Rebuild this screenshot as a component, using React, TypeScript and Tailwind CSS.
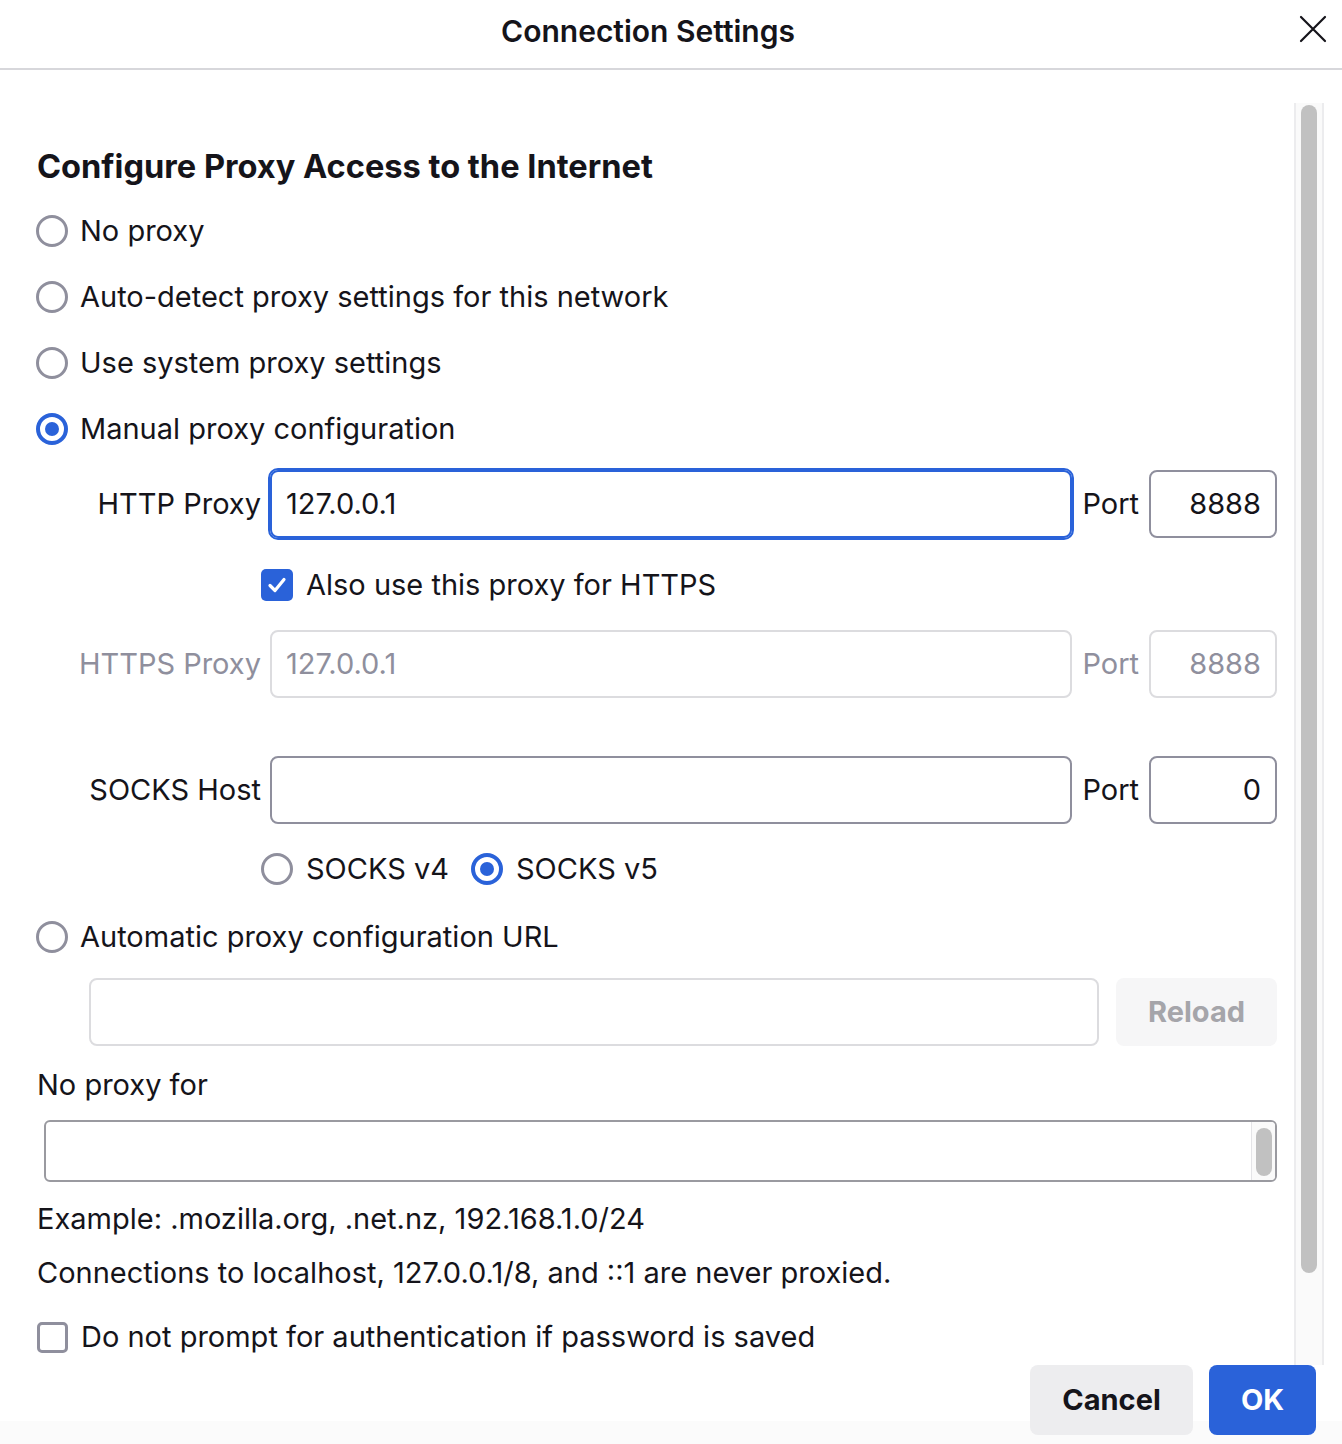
import React from "react";

const font = { fontFamily: "Inter, 'Noto Sans', 'Liberation Sans', sans-serif" };

function Radio({ checked }: { checked?: boolean }) {
  if (checked) {
    return (
      <span className="w-[32px] h-[32px] rounded-full border-[4px] border-[#2a62d9] bg-white flex items-center justify-center shrink-0">
        <span className="w-[14px] h-[14px] rounded-full bg-[#2a62d9]" />
      </span>
    );
  }
  return <span className="w-[32px] h-[32px] rounded-full border-[3px] border-[#8f8f9d] bg-white shrink-0" />;
}

function RadioRow({ label, checked, className = "" }: { label: string; checked?: boolean; className?: string }) {
  return (
    <div className={`flex items-center gap-[12px] h-[66px] -ml-[1px] ${className}`}>
      <Radio checked={checked} />
      <span>{label}</span>
    </div>
  );
}

function ProxyRow({
  label,
  value,
  port,
  disabled,
  focused,
  className = "",
}: {
  label: string;
  value: string;
  port: string;
  disabled?: boolean;
  focused?: boolean;
  className?: string;
}) {
  const text = disabled ? "text-[#8f8f9d]" : "text-[#15141a]";
  const border = disabled ? "border-[#dcdcdf]" : "border-[#8f8f9d]";
  return (
    <div className={`flex items-center h-[68px] ${className}`}>
      <span className={`w-[224px] text-right shrink-0 ${text}`}>{label}</span>
      <div
        className={`ml-[9px] flex-1 h-[68px] rounded-[8px] border-2 flex items-center pl-[14px] ${text} ${
          focused ? "border-[#2a62d9] outline-2 outline-[#2a62d9]" : border
        }`}
      >
        {value}
      </div>
      <span className={`ml-[10px] ${text}`}>Port</span>
      <div
        className={`ml-[10px] w-[128px] h-[68px] rounded-[8px] border-2 ${border} flex items-center justify-end pr-[14px] ${text}`}
      >
        {port}
      </div>
    </div>
  );
}

export default function App() {
  return (
    <div className="w-[1342px] h-[1444px] bg-white text-[#15141a] text-[29px] overflow-hidden" style={font}>
      <header className="h-[70px] border-b-2 border-[#d7d7db] flex items-center relative pb-[6px]">
        <h1 className="flex-1 text-center pr-[46px] text-[30px] font-semibold">Connection Settings</h1>
        <button className="absolute right-[14px] top-[14px] w-[30px] h-[30px] flex items-center justify-center">
          <svg width="28" height="28" viewBox="0 0 28 28" fill="none" stroke="#15141a" strokeWidth="2.2" strokeLinecap="round">
            <path d="M2 2 L26 26 M26 2 L2 26" />
          </svg>
        </button>
      </header>

      <div className="h-[1295px] flex">
        <div className="w-[1277px] pl-[37px] flex flex-col overflow-hidden *:shrink-0">
          <h2 className="mt-[70px] h-[52px] flex items-center text-[32.6px] font-bold">
            Configure Proxy Access to the Internet
          </h2>
          <RadioRow className="mt-[6px]" label="No proxy" />
          <RadioRow label="Auto-detect proxy settings for this network" />
          <RadioRow label="Use system proxy settings" />
          <RadioRow label="Manual proxy configuration" checked />

          <ProxyRow className="mt-[8px]" label="HTTP Proxy" value="127.0.0.1" port="8888" focused />

          <div className="mt-[14px] h-[66px] flex items-center pl-[224px] gap-[13px]">
            <span className="w-[32px] h-[32px] rounded-[5px] bg-[#2a62d9] flex items-center justify-center shrink-0">
              <svg width="22" height="22" viewBox="0 0 22 22" fill="none" stroke="white" strokeWidth="3.2" strokeLinecap="round" strokeLinejoin="round">
                <path d="M4 11.5 L9 16.5 L18 5.5" />
              </svg>
            </span>
            <span>Also use this proxy for HTTPS</span>
          </div>

          <ProxyRow className="mt-[12px]" label="HTTPS Proxy" value="127.0.0.1" port="8888" disabled />

          <ProxyRow className="mt-[58px]" label="SOCKS Host" value="" port="0" />

          <div className="mt-[12px] h-[66px] flex items-center pl-[224px]">
            <Radio />
            <span className="ml-[13px]">SOCKS v4</span>
            <span className="ml-[22px]">
              <Radio checked />
            </span>
            <span className="ml-[13px]">SOCKS v5</span>
          </div>

          <RadioRow className="mt-[2px]" label="Automatic proxy configuration URL" />

          <div className="mt-[8px] h-[68px] flex items-center pl-[52px] gap-[17px]">
            <div className="flex-1 h-[68px] rounded-[8px] border-2 border-[#dcdcdf]" />
            <button className="w-[161px] h-[68px] rounded-[8px] bg-[#f6f6f7] text-[#a5a5aa] font-bold">Reload</button>
          </div>

          <div className="mt-[6px] h-[66px] flex items-center">No proxy for</div>

          <div className="mt-[2px] ml-[7px] h-[62px] rounded-[6px] border-2 border-[#9a9aa0] flex justify-end overflow-hidden">
            <div className="w-[24px] h-full border-l border-[#e4e4e7] bg-[#fafafa] flex items-center justify-center pt-[2px]">
              <span className="w-[16px] h-[48px] rounded-full bg-[#c1c1c1]" />
            </div>
          </div>

          <div className="mt-[10px] h-[54px] flex items-center">Example: .mozilla.org, .net.nz, 192.168.1.0/24</div>
          <div className="h-[54px] flex items-center">Connections to localhost, 127.0.0.1/8, and ::1 are never proxied.</div>

          <div className="mt-[4px] h-[66px] flex items-center gap-[13px]">
            <span className="w-[31px] h-[31px] rounded-[5px] border-[3px] border-[#8f8f9d] shrink-0" />
            <span>Do not prompt for authentication if password is saved</span>
          </div>
        </div>

        <div className="ml-[17px] mt-[33px] w-[30px] border-x-2 border-[#ececee] bg-[#fafafa] flex justify-center">
          <span className="w-[16px] h-[1168px] mt-[2px] rounded-full bg-[#c1c1c1]" />
        </div>
      </div>

      <footer className="h-[79px] flex justify-end items-start gap-[16px] pr-[26px] bg-[linear-gradient(to_bottom,white_56px,#fbfbfb_56px)]">
        <button className="w-[163px] h-[70px] rounded-[8px] bg-[#ededef] font-bold text-[#15141a]">Cancel</button>
        <button className="w-[107px] h-[70px] rounded-[8px] bg-[#2a62d9] font-bold text-white">OK</button>
      </footer>
    </div>
  );
}
